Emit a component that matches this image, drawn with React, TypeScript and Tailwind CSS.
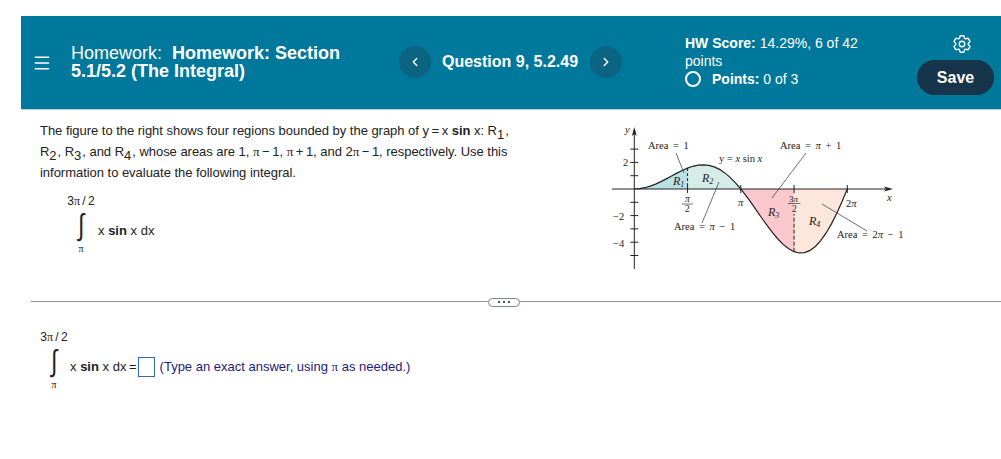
import { ChevronLeft, ChevronRight, Menu } from 'lucide-react';
import { HiOutlineCog6Tooth } from 'react-icons/hi2';

const AXIS_X = 24.3;
const AXIS_Y = 73;
const UNIT_X = 33.9;
const UNIT_Y = 13.3;

const px = (x: number) => AXIS_X + x * UNIT_X;
const py = (y: number) => AXIS_Y - y * UNIT_Y;

function curve(from: number, to: number) {
  const pts: string[] = [];
  for (let i = 0; i <= 40; i++) {
    const x = from + ((to - from) * i) / 40;
    pts.push(`${px(x).toFixed(2)} ${py(x * Math.sin(x)).toFixed(2)}`);
  }
  return pts.join(' L');
}

function region(from: number, to: number) {
  return `M${px(from)} ${AXIS_Y} L${curve(from, to)} L${px(to)} ${AXIS_Y} Z`;
}

const PI = Math.PI;

function Figure() {
  const yTicks = [3, 2, 1, -1, -2, -3, -4, -5];
  return (
    <svg width="300" height="165" viewBox="0 0 300 165" className="mt-[6px] shrink-0" style={{ fontFamily: '"Liberation Serif", serif' }}>
      <path d={region(0, PI / 2)} fill="#b9e0e4" />
      <path d={region(PI / 2, PI)} fill="#d6ece6" />
      <path d={region(PI, (3 * PI) / 2)} fill="#fac8cd" />
      <path d={region((3 * PI) / 2, 2 * PI)} fill="#fde6dc" />
      <line x1="2" y1={AXIS_Y} x2="280" y2={AXIS_Y} stroke="#222" strokeWidth="1" />
      <path d="M283 73 L274 70.6 L276 73 L274 75.4 Z" fill="#222" />
      <line x1={AXIS_X} y1="153" x2={AXIS_X} y2="14" stroke="#222" strokeWidth="1" />
      <path d="M24.3 11 L21.9 20 L24.3 18 L26.7 20 Z" fill="#222" />
      {yTicks.map((t) => (
        <line key={t} x1={AXIS_X - 4} x2={AXIS_X + 4} y1={py(t)} y2={py(t)} stroke="#222" strokeWidth="1" />
      ))}
      {[1, 2, 3, 4].map((k) => (
        <line key={k} x1={px((k * PI) / 2)} x2={px((k * PI) / 2)} y1={AXIS_Y - 4} y2={AXIS_Y + 4} stroke="#222" strokeWidth="1" />
      ))}
      <path d={`M${curve(0, 2 * PI)}`} fill="none" stroke="#222" strokeWidth="1.2" />
      <line x1={px(PI / 2)} x2={px(PI / 2)} y1={py(PI / 2)} y2={AXIS_Y} stroke="#222" strokeDasharray="3 2" />
      <line x1={px((3 * PI) / 2)} x2={px((3 * PI) / 2)} y1={py((-3 * PI) / 2)} y2="98" stroke="#222" strokeDasharray="4 2" />
      <g stroke="#333" strokeWidth="0.7">
        <line x1="66" y1="37" x2="74" y2="57" />
        <line x1="92" y1="107" x2="109" y2="66" />
        <line x1="162" y1="82" x2="196" y2="37" />
        <line x1="212" y1="88" x2="257" y2="115" />
        <line x1="72" x2="83" y1="88" y2="88" />
        <line x1="178" x2="190.5" y1="87.5" y2="87.5" />
      </g>
      <g fontSize="10.5" fill="#222" style={{ wordSpacing: '2px' }}>
        <text x="38" y="33">Area = 1</text>
        <text x="170" y="33">Area = <tspan fontStyle="italic">π</tspan> + 1</text>
        <text x="109" y="46" style={{ wordSpacing: '0px' }}>y = <tspan fontStyle="italic">x</tspan> sin <tspan fontStyle="italic">x</tspan></text>
        <text x="64" y="114">Area = <tspan fontStyle="italic">π</tspan> − 1</text>
        <text x="227" y="122">Area = 2<tspan fontStyle="italic">π</tspan> − 1</text>
        <text x="13" y="50">2</text>
        <text x="3" y="104">−2</text>
        <text x="3" y="131">−4</text>
        <text x="15" y="17" fontStyle="italic">y</text>
        <text x="277" y="85" fontStyle="italic">x</text>
        <text x="128" y="90" fontStyle="italic">π</text>
        <text x="236" y="91">2<tspan fontStyle="italic">π</tspan></text>
        <text x="63" y="69" fontStyle="italic" fontSize="12">R<tspan fontSize="8" dy="2">1</tspan></text>
        <text x="92" y="66" fontStyle="italic" fontSize="12">R<tspan fontSize="8" dy="2">2</tspan></text>
        <text x="158" y="100" fontStyle="italic" fontSize="12">R<tspan fontSize="8" dy="2">3</tspan></text>
        <text x="199" y="109" fontStyle="italic" fontSize="12">R<tspan fontSize="8" dy="2">4</tspan></text>
        <text x="75" y="86" fontSize="9.5" fontStyle="italic">π</text>
        <text x="75" y="96" fontSize="9.5">2</text>
        <text x="179" y="85.5" fontSize="9">3<tspan fontStyle="italic">π</tspan></text>
        <text x="182" y="96" fontSize="9.5">2</text>
      </g>
    </svg>
  );
}

function Pi() {
  return <span style={{ fontFamily: '"Liberation Serif", serif' }}>π</span>;
}

function Sub({ n }: { n: number }) {
  return <sub className="-bottom-[4px] mr-[1px] text-[13px]">{n}</sub>;
}

function Integral() {
  return (
    <div className="flex w-[28px] flex-col items-center text-[12px] leading-none">
      <span className="leading-[14px] whitespace-nowrap">3<Pi />&thinsp;/&thinsp;2</span>
      <span className="mt-[1px] h-[32px] origin-center scale-x-75 text-[30px] leading-[32px] font-light" style={{ fontFamily: '"Liberation Sans", sans-serif' }}>∫</span>
      <span className="mt-[3px] text-[10px] leading-[10px]"><Pi /></span>
    </div>
  );
}

export default function App() {
  return (
    <div className="h-[459px] w-[1001px] overflow-hidden bg-white pt-4 text-[#222]" style={{ fontFamily: '"Liberation Sans", Arial, sans-serif' }}>
      <header className="ml-[21px] flex h-[94px] items-center border-b border-[#b9d3dd] bg-[#00789b] text-white">
        <Menu className="ml-[11px] h-[20px] w-[20px]" strokeWidth={1.8} />
        <div className="mb-[1px] ml-[19px] w-[310px] text-[18px] leading-[18.5px] font-bold">
          <span className="font-normal">Homework:</span>&nbsp; Homework: Section 5.1/5.2 (The Integral)
        </div>
        <button className="mb-[1px] ml-[18px] flex h-[32px] w-[32px] items-center justify-center rounded-full bg-[#0a6482]">
          <ChevronLeft className="h-[14px] w-[14px]" strokeWidth={2.5} />
        </button>
        <span className="mb-[1px] ml-[11px] w-[148px] text-[16px] font-bold whitespace-nowrap">Question 9, 5.2.49</span>
        <button className="mb-[1px] flex h-[32px] w-[32px] items-center justify-center rounded-full bg-[#0a6482]">
          <ChevronRight className="h-[14px] w-[14px]" strokeWidth={2.5} />
        </button>
        <div className="mb-[3px] ml-[63px] w-[200px] text-[14px] leading-[18px]">
          <div><b>HW Score:</b> 14.29%, 6 of 42 points</div>
          <div className="flex items-center">
            <span className="mr-[11px] h-[16px] w-[16px] rounded-full border-2 border-white" />
            <span><b>Points:</b> 0 of 3</span>
          </div>
        </div>
        <div className="mt-[3px] ml-[32px] flex w-[77px] flex-col items-center gap-[5px]">
          <HiOutlineCog6Tooth className="ml-[13px] h-[22px] w-[22px]" />
          <button className="h-[35px] w-[77px] rounded-full bg-[#16344a] text-[16px] font-bold">Save</button>
        </div>
      </header>

      <main className="flex h-[191px] pl-[40px]">
        <div className="w-[570px] pt-[10px] text-[13px]">
          <p className="w-[478px] leading-[21px] tracking-[-0.03px]">
            The figure to the right shows four regions bounded by the graph of y&thinsp;=&thinsp;x <b>sin</b> x: R<Sub n={1} />, R<Sub n={2} />, R<Sub n={3} />, and R<Sub n={4} />, whose areas are 1, <Pi />&thinsp;−&thinsp;1, <Pi />&thinsp;+&thinsp;1, and 2<Pi />&thinsp;−&thinsp;1, respectively. Use this information to evaluate the following integral.
          </p>
          <div className="mt-[11px] ml-[27px] flex items-center gap-[3px]">
            <Integral />
            <span className="mt-[14px]">x <b>sin</b> x dx</span>
          </div>
        </div>
        <Figure />
      </main>

      <div className="ml-[31px] flex h-0 items-center border-t border-[#8a94a6]">
        <span className="ml-[457px] flex h-[9px] w-[32px] items-center justify-center gap-[3px] rounded-full border border-[#7b8698] bg-white">
          <i className="h-[2px] w-[2px] bg-[#555]" />
          <i className="h-[2px] w-[2px] bg-[#555]" />
          <i className="h-[2px] w-[2px] bg-[#555]" />
        </span>
      </div>

      <section className="mt-[28px] ml-[40px] flex items-center text-[13px]">
        <Integral />
        <div className="mt-[14px] flex items-center">
          <span className="ml-[2px]">x <b>sin</b> x dx&thinsp;=</span>
          <span className="mr-[5px] ml-[1px] h-[20px] w-[17px] border border-[#2b66c4]" />
          <span className="text-[#1f1a7a]">(Type an exact answer, using <Pi /> as needed.)</span>
        </div>
      </section>
    </div>
  );
}
